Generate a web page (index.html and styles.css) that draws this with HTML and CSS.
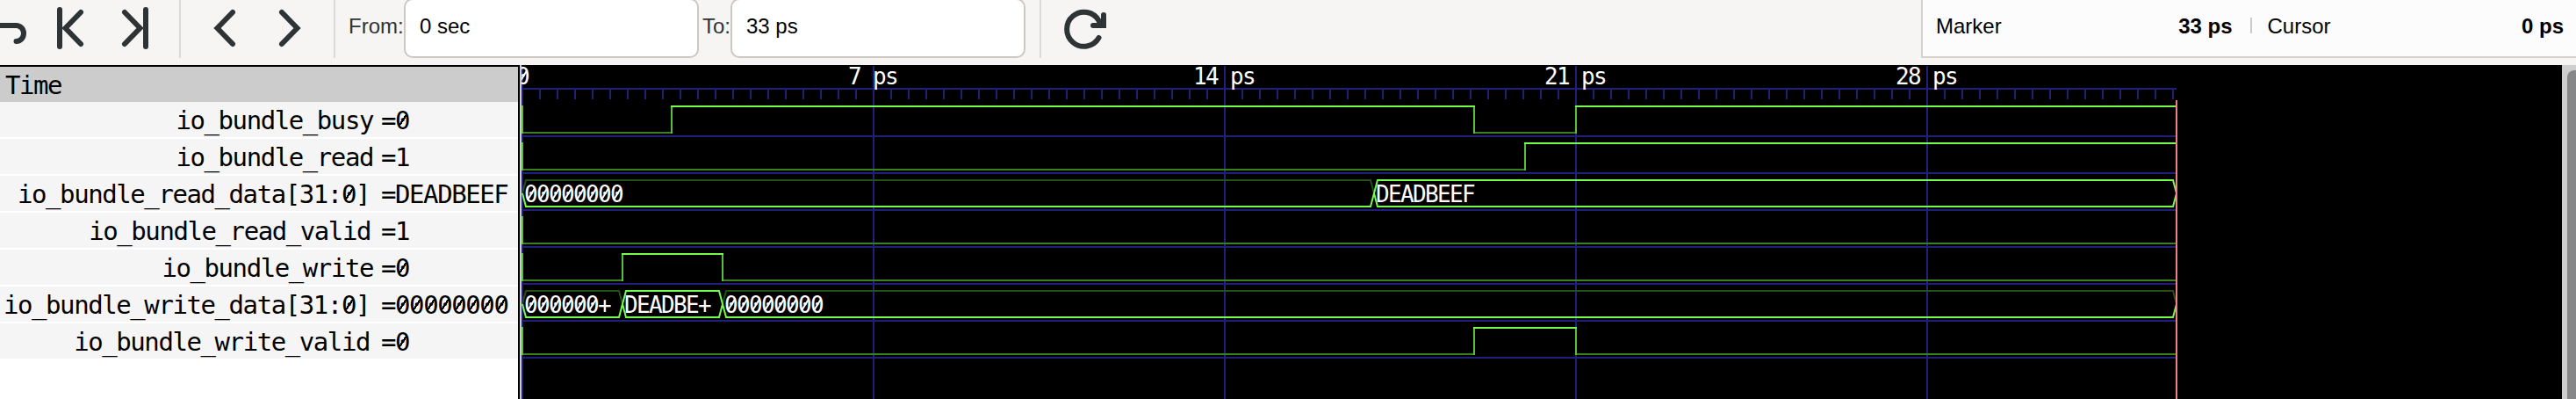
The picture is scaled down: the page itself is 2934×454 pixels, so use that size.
FILE: index.html
```
<!DOCTYPE html>
<html lang="en">
<head>
<meta charset="utf-8">
<title>Waveform viewer</title>
<link rel="stylesheet" href="styles.css">
</head>
<body>
<div class="app">
  <header class="toolbar">
    <svg class="icons" width="384" height="66" viewBox="0 0 384 66">
      <path class="rule" d="M205 0V66M381 0V66"/>
      <path class="stroke" d="M-4 29H18.500A8.500 9 0 0 1 18.500 47"/>
      <path class="stroke" d="M68 11V53M92 14L74.500 32L92 50"/>
      <path class="stroke" d="M166 11V53M142 14L159.500 32L142 50"/>
      <path class="stroke" d="M265 14L247.500 32L265 50"/>
      <path class="stroke" d="M321 14L338.500 32L321 50"/>
    </svg>
    <label class="label from">From:</label><div class="entry">0 sec</div>
    <label class="label to">To:</label><div class="entry">33 ps</div>
    <svg class="reload" width="94" height="66" viewBox="1180 0 94 66">
      <path class="rule" d="M1185 0V66"/>
      <path class="stroke" d="M1251.500 43A19.500 19.500 0 1 1 1251.500 23.500"/>
      <path class="stroke" d="M1257 17V29H1245"/>
      <path class="fill" d="M1249 23L1260 21V32H1250Z"/>
    </svg>
    <div class="status">
      <div class="field"><span>Marker</span><b>33 ps</b></div>
      <i class="divider"></i>
      <div class="field"><span>Cursor</span><b>0 ps</b></div>
    </div>
  </header>
  <main class="main">
    <section class="signals">
      <div class="time">Time</div>
      <div class="row"><span class="name">io_bundle_busy</span><span>=<i class="z">0</i></span></div>
      <div class="row"><span class="name">io_bundle_read</span><span>=1</span></div>
      <div class="row"><span class="name in4">io_bundle_read_data[31:<i class="z">0</i>]</span><span>=DEADBEEF</span></div>
      <div class="row"><span class="name in2">io_bundle_read_valid</span><span>=1</span></div>
      <div class="row"><span class="name">io_bundle_write</span><span>=<i class="z">0</i></span></div>
      <div class="row"><span class="name in4">io_bundle_write_data[31:<i class="z">0</i>]</span><span>=<i class="z">0</i><i class="z">0</i><i class="z">0</i><i class="z">0</i><i class="z">0</i><i class="z">0</i><i class="z">0</i><i class="z">0</i></span></div>
      <div class="row"><span class="name in4">io_bundle_write_valid</span><span>=<i class="z">0</i></span></div>
    </section>
    <div class="splitter"></div>
    <svg class="wave" width="2324" height="380" viewBox="594 74 2324 380">
      <defs>
        <pattern id="ticks" x="594" y="102" width="20" height="11" patternUnits="userSpaceOnUse"><rect width="2" height="11" fill="#20207a"/></pattern>
        <path id="s" d="M4.500 -3.500L12 -15.500"/>
        <g id="s6"><use href="#s"/><use href="#s" x="14"/><use href="#s" x="28"/><use href="#s" x="42"/><use href="#s" x="56"/><use href="#s" x="70"/></g>
        <g id="s8"><use href="#s6"/><use href="#s" x="84"/><use href="#s" x="98"/></g>
      </defs>
      <g class="grid">
        <path d="M596 101H2479M595 75V454M995 75V454M1395 75V454M1795 75V454M2195 75V454"/>
        <path d="M596 155H2478M596 197H2478M596 239H2478M596 281H2478M596 323H2478M596 365H2478M596 407H2478"/>
      </g>
      <rect x="596" y="102" width="1882" height="11" fill="url(#ticks)"/>
      <g class="low">
        <path d="M594 151H766M1678 151H1796M594 193H1738M594 277H2478M594 319H710M822 319H2478M594 403H1680M1794 403H2478"/>
      </g>
      <g class="edge">
        <path d="M595 120V152M765 120V152M1679 120V152M1795 120V152M595 162V194M1737 162V194M595 246V278M595 288V320M709 288V320M823 288V320M595 372V404M1679 372V404M1795 372V404"/>
      </g>
      <g class="high">
        <path d="M764 121H1680M1794 121H2478M1736 163H2478M708 289H824M1678 373H1796"/>
      </g>
      <g class="zero">
        <path d="M595 220L599 205H1561L1565 220M595 346L599 331H705L709 346M823 346L827 331H2475L2479 346"/>
      </g>
      <g class="high">
        <path d="M595 220L599 235H1561L1569 205H2475L2479 220L2475 235H1569L1565 220"/>
        <path d="M595 346L599 361H705L713 331H819L827 361H2475L2479 346M709 346L713 361H819L823 346"/>
      </g>
      <path class="marker" d="M2479 114V454"/>
      <g class="text">
        <text x="588" y="96">0</text><text x="966" y="96">7 ps</text><text x="1359" y="96">14 ps</text><text x="1759" y="96">21 ps</text><text x="2159" y="96">28 ps</text>
        <text x="597" y="230">00000000</text><text x="1567" y="230">DEADBEEF</text>
        <text x="597" y="356">000000+</text><text x="711" y="356">DEADBE+</text><text x="825" y="356">00000000</text>
      </g>
      <g class="slash">
        <use href="#s" x="588" y="96"/>
        <use href="#s8" x="597" y="230"/>
        <use href="#s6" x="597" y="356"/>
        <use href="#s8" x="825" y="356"/>
      </g>
    </svg>
    <div class="scrollbar"><div class="thumb"></div></div>
  </main>
</div>
</body>
</html>
```
FILE: styles.css
```
* { box-sizing: border-box; }
body { margin: 0; }
.app {
  width: 2934px;
  height: 454px;
  overflow: hidden;
  display: flex;
  flex-direction: column;
  background: #f6f5f4;
  font: 24px/28px "Liberation Sans", Arial, sans-serif;
  color: #000;
}
.toolbar { display: flex; height: 74px; align-items: flex-start; flex: none; }
.toolbar svg { display: block; flex: none; }
.rule { stroke: #dcdad8; stroke-width: 2; }
.stroke { fill: none; stroke: #2e3436; stroke-width: 6; stroke-linecap: round; }
.fill { fill: #2e3436; }
.label { color: #2e3436; padding-top: 16px; flex: none; white-space: nowrap; }
.from { width: 63px; margin-left: 13px; }
.to { width: 32px; margin-left: 4px; }
.entry {
  width: 336px;
  height: 68px;
  margin-top: -2px;
  padding: 16px 0 0 16px;
  border: 2px solid #cdc7c2;
  border-radius: 10px;
  background: #fff;
  flex: none;
}
.reload { margin-left: 12px; }
.status {
  margin-left: auto;
  width: 746px;
  height: 66px;
  display: flex;
  border: solid #d5d0cc;
  border-width: 0 0 2px 2px;
  background: #fcfcfc;
  padding: 16px 14px 0 15px;
}
.field { flex: 1; display: flex; justify-content: space-between; }
.divider { width: 2px; height: 18px; background: #ccc; margin: 4px 18px 0 20px; }
.main { display: flex; height: 380px; flex: none; }
.signals {
  width: 592px;
  border: solid #000;
  border-width: 2px 2px 0 0;
  background: #fff;
  font: 29px/40px "DejaVu Sans Mono", monospace;
  letter-spacing: -1.420px;
  white-space: nowrap;
  flex: none;
}
.time { height: 40px; padding-left: 6px; background: #ccc; line-height: 43px; }
.row { display: flex; height: 40px; margin-bottom: 2px; background: #f5f5f5; line-height: 43px; }
.name { width: 434px; padding-right: 9px; text-align: right; }
.in2 { padding-right: 12px; }
.in4 { padding-right: 13px; }
/* slashed zero */
.z {
  font-style: normal;
  background: linear-gradient(to bottom right, transparent 44%, #000 44%, #000 56%, transparent 56%) 4px 9px / 10px 15px no-repeat;
}
.splitter { width: 2px; background: #ccc; }
.wave { display: block; background: #000; flex: none; }
.wave path { fill: none; stroke-width: 2; }
.grid { stroke: #20207a; }
.low { stroke: #388020; }
.edge { stroke: #54c038; }
.high { stroke: #75fb4c; }
.zero { stroke: #245016; }
.marker { stroke: #ee8080; }
.slash { stroke: #fff; }
.text { fill: #fff; font: 26px "DejaVu Sans Mono", monospace; letter-spacing: -1.650px; }
.scrollbar { width: 16px; background: #cecece; padding: 6px 0 0 6px; overflow: hidden; }
.thumb { width: 20px; height: 400px; border-radius: 8px; background: #868788; }
```
